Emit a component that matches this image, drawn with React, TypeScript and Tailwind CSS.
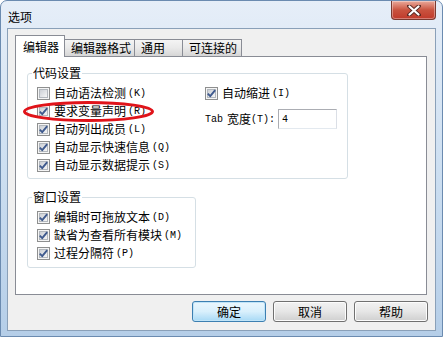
import React from "react";

const font = { fontFamily: '"Noto Sans CJK SC", "Liberation Sans", sans-serif' };

function CB({ checked }: { checked: boolean }) {
  return (
    <svg width="13" height="13" viewBox="0 0 13 13" className="shrink-0">
      <defs>
        <linearGradient id="cbg" x1="0" y1="0" x2="1" y2="1">
          <stop offset="0" stopColor="#c9cdd3" />
          <stop offset="1" stopColor="#f8f8f8" />
        </linearGradient>
      </defs>
      <rect x="0.5" y="0.5" width="12" height="12" fill="#f5f5f5" stroke="#8e8f8f" />
      <rect x="2.5" y="2.5" width="8" height="8" fill="url(#cbg)" stroke="#b2b7bd" />
      {checked && (
        <path d="M2.8 6.6 L5.2 9.2 L10.2 3.2" stroke="#3f5a8e" strokeWidth="1.9" fill="none" strokeLinejoin="round" />
      )}
    </svg>
  );
}

function Key({ k }: { k: string }) {
  return (
    <span className="ml-[2px] text-[10px] font-['Liberation_Mono'] text-black">({k})</span>
  );
}

function Row({ checked, label, k }: { checked: boolean; label: string; k: string }) {
  return (
    <div className="h-[18px] flex items-center">
      <CB checked={checked} />
      <span className="ml-[4px] text-[12px] leading-[14px] text-black">{label}</span>
      <Key k={k} />
    </div>
  );
}

function Tab({ label, w, active }: { label: string; w: number; active?: boolean }) {
  if (active) {
    return (
      <div
        className="relative z-10 h-[22px] -mb-px bg-white border border-b-0 border-[#898c95] flex items-center pl-[7px] text-[12px] text-black"
        style={{ width: w }}
      >
        {label}
      </div>
    );
  }
  return (
    <div
      className="-ml-px h-[17px] border border-b-0 border-[#898c95] bg-gradient-to-b from-[#f4f4f4] via-[#e9e9e9] to-[#d6d6d6] flex items-center pl-[6px] text-[12px] text-black"
      style={{ width: w }}
    >
      {label}
    </div>
  );
}

function Btn({ label, def }: { label: string; def?: boolean }) {
  return (
    <div
      className={`w-[74px] h-[21px] rounded-[3px] border flex items-center justify-center text-[12px] text-black ${
        def
          ? "border-[#3c7fb1] bg-gradient-to-b from-[#eaf6fd] via-[#d9f0fc] to-[#a7d9f5] shadow-[inset_0_0_0_1px_#c0e4f8]"
          : "border-[#707070] bg-gradient-to-b from-[#f2f2f2] via-[#e6e6e6] to-[#cfcfcf] shadow-[inset_0_0_0_1px_#fcfcfc]"
      }`}
    >
      {label}
    </div>
  );
}

export default function App() {
  return (
    <div
      className="relative w-[443px] h-[337px] overflow-hidden rounded-t-[7px] border border-[#6b8bb0] bg-gradient-to-b from-[#e6eef8] via-[#cddff1] to-[#b5cee8]"
      style={font}
    >
      {/* title bar */}
      <div className="h-[27px] flex items-start">
        <div className="ml-[7px] mt-[8px] text-[12px] leading-[16px] text-black">选项</div>
        <div className="ml-auto mr-[6px] w-[45px] h-[19px] rounded-b-[4px] border border-t-0 border-[#7a3a30] bg-gradient-to-b from-[#e9a99b] via-[#c9533f] to-[#c0392a] flex items-center justify-center shadow-[inset_0_0_0_1px_rgba(255,255,255,0.35)]">
          <svg width="14" height="11" viewBox="0 0 14 11">
            <path d="M2 1 L12 10 M12 1 L2 10" stroke="#5a2a24" strokeWidth="4" strokeLinecap="round" />
            <path d="M2.5 1.5 L11.5 9.5 M11.5 1.5 L2.5 9.5" stroke="#ffffff" strokeWidth="2.2" strokeLinecap="round" />
          </svg>
        </div>
      </div>

      {/* client area */}
      <div className="mx-[6px] h-[303px] border border-[#8aa0b8] bg-[#f0f0f0] flex flex-col">
        <div className="pt-[6px] pl-[7px]">
          <div className="flex items-end h-[21px]">
            <Tab label="编辑器" w={50} active />
            <Tab label="编辑器格式" w={71} />
            <Tab label="通用" w={49} />
            <Tab label="可连接的" w={60} />
          </div>
          <div className="w-[412px] h-[239px] bg-white border border-[#898c95] pl-[11px] pt-[16px]">
            {/* group 1 */}
            <div className="relative w-[321px] h-[106px] border border-[#d5dfe5] rounded-[3px] flex pt-[10px] pl-[9px]">
              <span className="absolute -top-[8px] left-[4px] px-[1px] bg-white text-[12px] leading-[14px] text-black">
                代码设置
              </span>
              <div className="w-[168px] flex flex-col">
                <Row checked={false} label="自动语法检测" k="K" />
                <Row checked label="要求变量声明" k="R" />
                <Row checked label="自动列出成员" k="L" />
                <Row checked label="自动显示快速信息" k="Q" />
                <Row checked label="自动显示数据提示" k="S" />
              </div>
              <div className="flex flex-col">
                <Row checked label="自动缩进" k="I" />
                <div className="mt-[7px] h-[20px] flex items-center">
                  <span className="text-[10px] font-['Liberation_Mono'] text-black">Tab</span>
                  <span className="ml-[4px] text-[12px] leading-[14px] text-black">宽度</span>
                  <span className="text-[10px] font-['Liberation_Mono'] text-black">(T):</span>
                  <div className="ml-[3px] w-[59px] h-[20px] border border-[#abadb3] border-b-[#e3e9ef] border-r-[#dbdfe6] bg-white flex items-center pl-[3px]">
                    <span className="text-[10px] font-['Liberation_Mono'] text-black">4</span>
                  </div>
                </div>
              </div>
              {/* red ellipse annotation */}
              <svg className="absolute left-[-5px] top-[27px] pointer-events-none" width="131" height="21" viewBox="0 0 131 21">
                <ellipse cx="65.5" cy="10.5" rx="64" ry="9" fill="none" stroke="#e0141a" strokeWidth="3" />
              </svg>
            </div>
            {/* group 2 */}
            <div className="relative mt-[18px] w-[169px] h-[71px] border border-[#d5dfe5] rounded-[3px] flex flex-col pt-[10px] pl-[9px]">
              <span className="absolute -top-[8px] left-[4px] px-[1px] bg-white text-[12px] leading-[14px] text-black">
                窗口设置
              </span>
              <Row checked label="编辑时可拖放文本" k="D" />
              <Row checked label="缺省为查看所有模块" k="M" />
              <Row checked label="过程分隔符" k="P" />
            </div>
          </div>
        </div>
        <div className="mt-[6px] pl-[184px] flex gap-[7px]">
          <Btn label="确定" def />
          <Btn label="取消" />
          <Btn label="帮助" />
        </div>
      </div>
    </div>
  );
}
